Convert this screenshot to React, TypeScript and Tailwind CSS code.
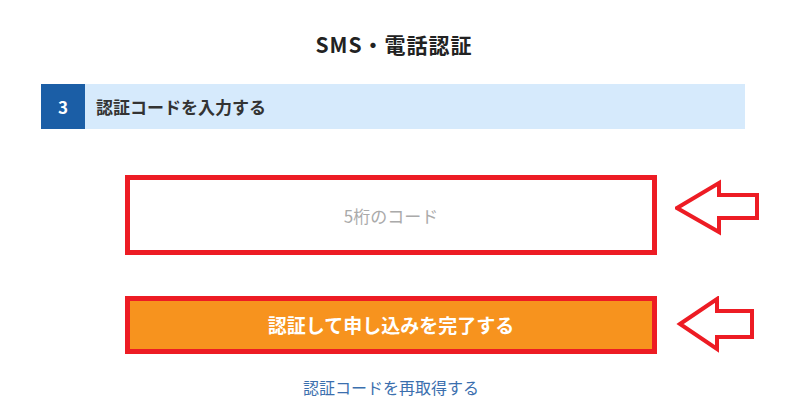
import React from 'react';

const font = { fontFamily: '"Noto Sans CJK JP", "Noto Sans", sans-serif' };

function LeftArrow({ points, w, h }: { points: string; w: number; h: number }) {
    return (
        <svg width={w} height={h} viewBox={`0 0 ${w} ${h}`} className="shrink-0">
            <polygon points={points} fill="none" stroke="#ed1c24" strokeWidth="4" strokeLinejoin="miter" />
        </svg>
    );
}

export default function App() {
    return (
        <div className="min-h-screen bg-white" style={font}>
            <div className="w-[704px] ml-[41px] pt-[30px]">
                <h1 className="text-center text-[21px] leading-[28px] font-bold text-[#222] tracking-[1px] pl-[2px]">
                    SMS・電話認証
                </h1>

                <div className="mt-[26px] h-[45px] flex bg-[#d6eafc]">
                    <div className="w-[44px] shrink-0 bg-[#1b5ea6] flex items-center justify-center text-white font-bold text-[17px]">
                        3
                    </div>
                    <div className="pl-[11px] flex items-center text-[17px] font-bold text-[#333]">
                        認証コードを入力する
                    </div>
                </div>

                <div className="mt-[46px] ml-[84px] flex items-start">
                    <input
                        type="text"
                        placeholder="5桁のコード"
                        className="w-[532px] shrink-0 h-[80px] border-[5px] border-[#ed1c24] bg-white text-center text-[17px] text-[#333] placeholder:text-[#aaa] outline-none"
                    />
                    <div className="ml-[18px] shrink-0">
                        <LeftArrow w={86} h={64} points="2,33 44,8 44,20 82,20 82,43 44,43 44,57" />
                    </div>
                </div>

                <div className="mt-[41px] ml-[84px] flex items-start">
                    <button className="w-[532px] shrink-0 h-[58px] border-[5px] border-[#ed1c24] bg-[#f7931e] text-white font-bold text-[19px] flex items-center justify-center">
                        認証して申し込みを完了する
                    </button>
                    <div className="ml-[18px] shrink-0">
                        <LeftArrow w={82} h={58} points="5,28 42,3 42,15 77,15 77,41 42,41 42,53" />
                    </div>
                </div>

                <div className="mt-[21px] ml-[84px] w-[532px] text-center leading-[24px]">
                    <a href="#" className="text-[16px] text-[#3b6fae]">
                        認証コードを再取得する
                    </a>
                </div>
            </div>
        </div>
    );
}
